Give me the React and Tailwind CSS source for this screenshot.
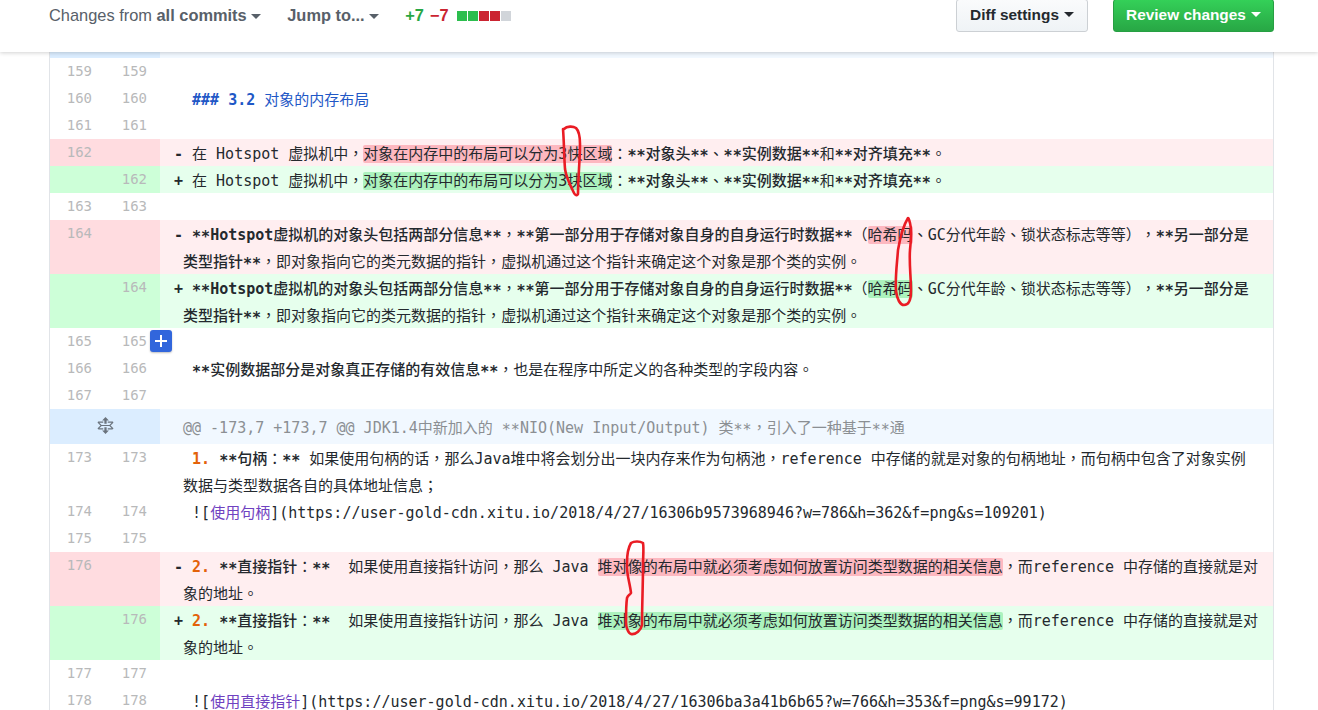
import React from "react";

const Caret = ({ className }) => (
  <span className={`inline-block w-0 h-0 border-x-[5px] border-x-transparent border-t-[5px] align-middle ${className}`} />
);

const Del = ({ children }) => <span className="bg-[#fdb8c0] rounded-[2px]">{children}</span>;
const Add = ({ children }) => <span className="bg-[#acf2bd] rounded-[2px]">{children}</span>;
const B = ({ children }) => <span className="font-bold">{children}</span>;
const M = ({ children }) => <span className="font-medium">{children}</span>;
const O = ({ children }) => <span className="font-bold text-[#e36209]">{children}</span>;
const L = ({ children }) => <span className="text-[#6f42c1]">{children}</span>;
const S = () => <span className="relative top-[2px] font-bold">**</span>;
const T = () => <span className="relative top-[2px]">**</span>;
const P = ({ children }) => <span className="font-['Noto_Sans_CJK_TC',monospace] font-normal leading-none">{children}</span>;

const Row = ({ a, b, type, children }) => {
  const isDel = type === "del";
  const isAdd = type === "add";
  const gutter = isDel ? "bg-[#ffdce0]" : isAdd ? "bg-[#cdffd8]" : "bg-white";
  const code = isDel ? "bg-[#ffeef0]" : isAdd ? "bg-[#e6ffed]" : "bg-white";
  return (
    <div className="flex">
      <div className={`w-[55px] shrink-0 pr-[13px] text-right text-[14px] text-[#b8b9ba] ${gutter}`}>{a}</div>
      <div className={`w-[55px] shrink-0 pr-[13px] text-right text-[14px] text-[#b8b9ba] ${gutter}`}>{b}</div>
      <div className={`flex-1 min-w-0 min-h-[27px] text-[15px] text-[#24292e] ${code}`}>
        <div className="translate-y-[2px] pl-[23px] -indent-[9px] whitespace-pre-wrap">
          {isDel ? <B>- </B> : isAdd ? <B>+ </B> : "  "}
          {children}
        </div>
      </div>
    </div>
  );
};

const Unfold = () => (
  <svg viewBox="0 0 14 16" width="17" height="18" fill="#6a737d" className="-mt-[2px]">
    <path d="M11.5 7.5L14 10c0 .55-.45 1-1 1H9v-1h3.5l-2-2h-7l-2 2H5v1H1c-.55 0-1-.45-1-1l2.5-2.5L0 5c0-.55.45-1 1-1h4v1H1.5l2 2h7l2-2H9V4h4c.55 0 1 .45 1 1l-2.5 2.5zM6 6h2V3h2L7 0 4 3h2v3zm2 3H6v3H4l3 3 3-3H8V9z" />
  </svg>
);

const Line162 = ({ H, ch }) => (
  <>
    在 Hotspot 虚拟机中<P>，</P><H>对象在内存中的布局可以分为3{ch}区域</H><P>：</P><M><S />对象头<S /></M><P>、</P><M><S />实例数据<S /></M>和<M><S />对齐填充<S /></M><P>。</P>
  </>
);

const Line164 = ({ H, ch }) => (
  <>
    <M><S /><B>Hotspot</B>虚拟机的对象头包括两部分信息<S /></M><P>，</P><M><S />第一部分用于存储对象自身的自身运行时数据<S /></M>（<H>哈希{ch}</H><P>、</P>GC分代年龄<P>、</P>锁状态标志等等）<P>，</P><M><S />另一部分是</M>
    <br />
    <M>类型指针<S /></M><P>，</P>即对象指向它的类元数据的指针<P>，</P>虚拟机通过这个指针来确定这个对象是那个类的实例<P>。</P>
  </>
);

const Line176 = ({ H, ch }) => (
  <>
    <O>2.</O> <M><S />直接指针<P>：</P><S /></M>  如果使用直接指针访问<P>，</P>那么 Java <H>堆对{ch}的布局中就必须考虑如何放置访问类型数据的相关信息</H><P>，</P>而reference 中存储的直接就是对
    <br />
    象的地址<P>。</P>
  </>
);

export default function App() {
  return (
    <div className="relative h-[710px] w-[1318px] overflow-hidden bg-white font-['DejaVu_Sans_Mono','Noto_Sans_CJK_SC',monospace] leading-[27px] [text-spacing-trim:space-all]">
      <header className="relative z-10 flex h-[52px] items-start justify-between bg-white pl-[49px] pr-[44px] font-['Liberation_Sans','Noto_Sans_CJK_SC',sans-serif] text-[15.4px] leading-[30px] shadow-[0_1px_4px_rgba(0,0,0,0.18)]">
        <div className="flex items-center text-[16.4px]">
          <span className="text-[#586069]">
            Changes from <span className="font-bold">all commits</span> <Caret className="border-t-[#586069]" />
          </span>
          <span className="ml-[26px] font-bold text-[#586069]">
            Jump to... <Caret className="border-t-[#586069]" />
          </span>
          <span className="ml-[26px] font-bold text-[#28a745]">+7</span>
          <span className="ml-[6px] font-bold text-[#cb2431]">−7</span>
          <span className="ml-[8px] mt-px flex gap-px">
            <i className="block h-[10px] w-[10px] bg-[#2cbe4e]" />
            <i className="block h-[10px] w-[10px] bg-[#2cbe4e]" />
            <i className="block h-[10px] w-[10px] bg-[#cb2431]" />
            <i className="block h-[10px] w-[10px] bg-[#cb2431]" />
            <i className="block h-[10px] w-[10px] bg-[#d1d5da]" />
          </span>
        </div>
        <div className="flex items-start">
          <button className="-mt-px flex h-[33px] w-[132px] items-center justify-center gap-[5px] rounded-[3px] border border-[#ccd0d4] bg-gradient-to-b from-[#fafbfc] to-[#eff3f6] pb-[2px] font-bold text-[#24292e]">
            Diff settings <Caret className="border-t-[#24292e]" />
          </button>
          <button className="-mt-px ml-[25px] flex h-[33px] w-[161px] items-center justify-center gap-[5px] rounded-[3px] border border-[#279f43] bg-gradient-to-b from-[#34d058] to-[#28a745] pb-[2px] font-bold text-white">
            Review changes <Caret className="border-t-white" />
          </button>
        </div>
      </header>

      <main className="ml-[49px] w-[1225px] border-x border-[#e1e4e8]">
        <div className="flex h-[6px]">
          <div className="w-[110px] bg-[#dbedff]" />
          <div className="flex-1 bg-[#f1f8ff]" />
        </div>
        <Row a="159" b="159" />
        <Row a="160" b="160">
          <span className="text-[#1f58c6]"><B>### 3.2</B> 对象的内存布局</span>
        </Row>
        <Row a="161" b="161" />
        <Row a="162" type="del"><Line162 H={Del} ch="快" /></Row>
        <Row b="162" type="add"><Line162 H={Add} ch="块" /></Row>
        <Row a="163" b="163" />
        <Row a="164" type="del"><Line164 H={Del} ch="吗" /></Row>
        <Row b="164" type="add"><Line164 H={Add} ch="码" /></Row>
        <Row a="165" b="165" />
        <Row a="166" b="166">
          <M><S />实例数据部分是对象真正存储的有效信息<S /></M><P>，</P>也是在程序中所定义的各种类型的字段内容<P>。</P>
        </Row>
        <Row a="167" b="167" />
        <div className="flex h-[35px]">
          <div className="flex w-[110px] shrink-0 items-center justify-center bg-[#dbedff]">
            <Unfold />
          </div>
          <div className="flex-1 whitespace-pre bg-[#f1f8ff] pl-[23px] text-[15px] leading-[35px] text-[#8b8f93]">
            <div className="translate-y-[2px]">
              @@ -173,7 +173,7 @@ JDK1.4中新加入的 <T />NIO(New Input/Output) 类<T /><P>，</P>引入了一种基于<T />通
            </div>
          </div>
        </div>
        <Row a="173" b="173">
          <O>1.</O> <M><S />句柄<P>：</P><S /></M> 如果使用句柄的话<P>，</P>那么Java堆中将会划分出一块内存来作为句柄池<P>，</P>reference 中存储的就是对象的句柄地址<P>，</P>而句柄中包含了对象实例
          <br />
          数据与类型数据各自的具体地址信息<P>；</P>
        </Row>
        <Row a="174" b="174">
          ![<L>使用句柄</L>](https://user-gold-cdn.xitu.io/2018/4/27/16306b9573968946?w=786&h=362&f=png&s=109201)
        </Row>
        <Row a="175" b="175" />
        <Row a="176" type="del"><Line176 H={Del} ch="像" /></Row>
        <Row b="176" type="add"><Line176 H={Add} ch="象" /></Row>
        <Row a="177" b="177" />
        <Row a="178" b="178">
          ![<L>使用直接指针</L>](https://user-gold-cdn.xitu.io/2018/4/27/16306ba3a41b6b65?w=766&h=353&f=png&s=99172)
        </Row>
      </main>

      <button className="absolute left-[150px] top-[330px] flex h-[22px] w-[22px] items-center justify-center rounded-[3px] bg-[#3166dc] shadow-[0_1px_2px_rgba(0,0,0,0.25)]">
        <svg width="14" height="14" viewBox="0 0 14 14" fill="#fff">
          <path d="M6 1h2v5h5v2H8v5H6V8H1V6h5z" />
        </svg>
      </button>

      <svg className="pointer-events-none absolute left-0 top-0 z-20" width="1318" height="710" fill="none" stroke="#ea1c24" strokeWidth="2.6" strokeLinecap="round" strokeLinejoin="round">
        <path d="M564 129c3-3 9-3 12-1c3 3 4 9 4 16c0 16-2 34-2 50c-1 2-3 1-4-1c-4-8-8-16-9-24c-1-14-1-28-2-40z" />
        <path d="M908 218c-5 8-8 20-10 32c-1 14-3 28-2 41c1 8 4 14 8 14c5 0 7-6 7-14c0-14-2-28-1-41c1-9 2-20 0-27c-1-3-1-5-2-5z" />
        <path d="M631 543c3-2 9-2 12 0c1 6 0 14 0 22c0 20-1 40-1 60c-1 5-6 10-11 9c-3-1-5-7-5-12c0-8 0-17 1-24c1-3 3-3 4-5c-1-10-5-20-4-30c0-8 1-15 4-20z" />
      </svg>
    </div>
  );
}
